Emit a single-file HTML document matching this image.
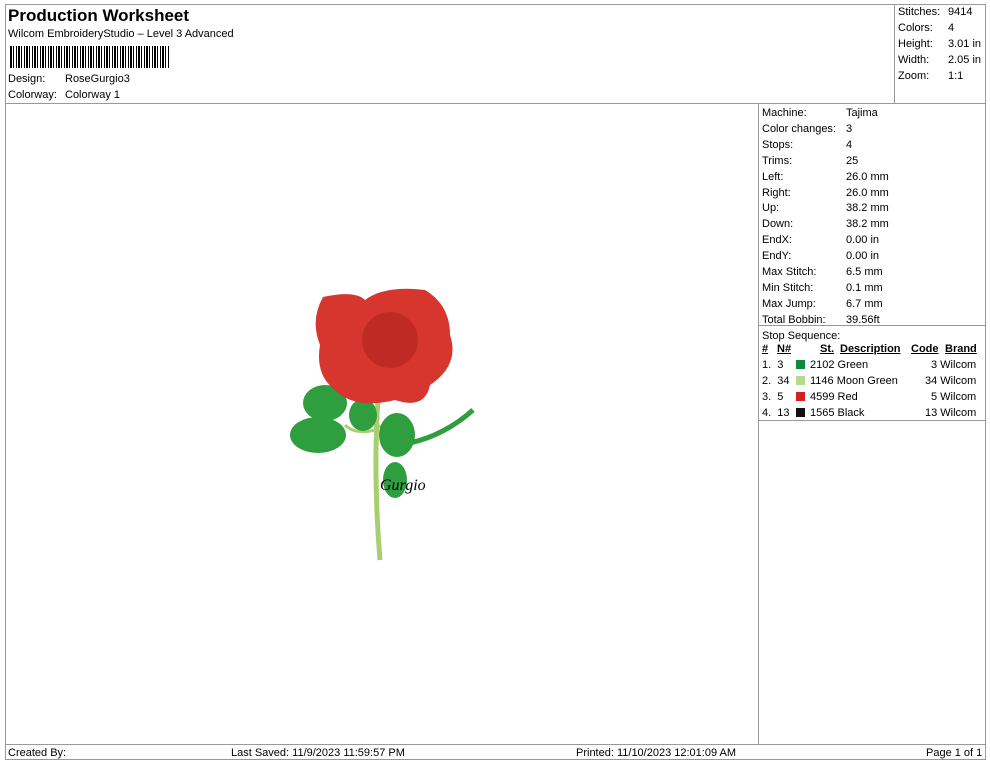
<!DOCTYPE html>
<html><head><style>
body{margin:0;width:990px;height:762px;background:#fff;font-family:"Liberation Sans",Arial,sans-serif;color:#000;position:relative;overflow:hidden}
.a{position:absolute;font-size:11px;white-space:nowrap}
.l{position:absolute;background:#999}
</style></head><body>
<div class="l" style="left:5px;top:4px;width:981px;height:1px"></div>
<div class="l" style="left:5px;top:4px;width:1px;height:756px"></div>
<div class="l" style="left:985px;top:4px;width:1px;height:756px"></div>
<div class="l" style="left:5px;top:759px;width:981px;height:1px"></div>
<div class="l" style="left:5px;top:103px;width:981px;height:1px"></div>
<div class="l" style="left:894px;top:4px;width:1px;height:100px"></div>
<div class="l" style="left:758px;top:103px;width:1px;height:641px"></div>
<div class="l" style="left:758px;top:325px;width:228px;height:1px"></div>
<div class="l" style="left:758px;top:420px;width:228px;height:1px"></div>
<div class="l" style="left:5px;top:744px;width:981px;height:1px"></div>
<div class="a" style="left:8px;top:6px;font-size:17px;font-weight:bold">Production Worksheet</div>
<div class="a" style="left:8px;top:28px">Wilcom EmbroideryStudio – Level 3 Advanced</div>
<div style="position:absolute;left:10px;top:46px;width:160px;height:22px;background:repeating-linear-gradient(90deg,#000 0 2px,#fff 2px 3px,#000 3px 4px,#fff 4px 6px,#000 6px 7px,#fff 7px 8px)"></div>
<div class="a" style="left:8px;top:73px">Design:</div><div class="a" style="left:65px;top:73px">RoseGurgio3</div>
<div class="a" style="left:8px;top:89px">Colorway:</div><div class="a" style="left:65px;top:89px">Colorway 1</div>
<div class="a" style="left:898px;top:6px">Stitches:</div><div class="a" style="left:948px;top:6px">9414</div>
<div class="a" style="left:898px;top:22px">Colors:</div><div class="a" style="left:948px;top:22px">4</div>
<div class="a" style="left:898px;top:38px">Height:</div><div class="a" style="left:948px;top:38px">3.01 in</div>
<div class="a" style="left:898px;top:54px">Width:</div><div class="a" style="left:948px;top:54px">2.05 in</div>
<div class="a" style="left:898px;top:70px">Zoom:</div><div class="a" style="left:948px;top:70px">1:1</div>
<div style="position:absolute;left:762px;top:106px;line-height:15.9px;font-size:11px">
Machine:<br>Color changes:<br>Stops:<br>Trims:<br>Left:<br>Right:<br>Up:<br>Down:<br>EndX:<br>EndY:<br>Max Stitch:<br>Min Stitch:<br>Max Jump:<br>Total Bobbin:<br>Stop Sequence:</div>
<div style="position:absolute;left:846px;top:106px;line-height:15.9px;font-size:11px">
Tajima<br>3<br>4<br>25<br>26.0 mm<br>26.0 mm<br>38.2 mm<br>38.2 mm<br>0.00 in<br>0.00 in<br>6.5 mm<br>0.1 mm<br>6.7 mm<br>39.56ft</div>
<div class="a" style="left:762px;top:343px;font-weight:bold;text-decoration:underline">#</div>
<div class="a" style="left:777px;top:343px;font-weight:bold;text-decoration:underline">N#</div>
<div class="a" style="left:820px;top:343px;font-weight:bold;text-decoration:underline">St.</div>
<div class="a" style="left:840px;top:343px;font-weight:bold;text-decoration:underline">Description</div>
<div class="a" style="left:911px;top:343px;font-weight:bold;text-decoration:underline">Code</div>
<div class="a" style="left:945px;top:343px;font-weight:bold;text-decoration:underline">Brand</div>
<div class="a" style="left:762px;top:359px">1.&nbsp; 3</div><div style="position:absolute;left:796px;top:360px;width:9px;height:9px;background:#0d8a3c"></div><div class="a" style="left:810px;top:359px">2102 Green</div><div class="a" style="left:931px;top:359px">3 Wilcom</div>
<div class="a" style="left:762px;top:375px">2.&nbsp; 34</div><div style="position:absolute;left:796px;top:376px;width:9px;height:9px;background:#b5dc8a"></div><div class="a" style="left:810px;top:375px">1146 Moon Green</div><div class="a" style="left:925px;top:375px">34 Wilcom</div>
<div class="a" style="left:762px;top:391px">3.&nbsp; 5</div><div style="position:absolute;left:796px;top:392px;width:9px;height:9px;background:#d42020"></div><div class="a" style="left:810px;top:391px">4599 Red</div><div class="a" style="left:931px;top:391px">5 Wilcom</div>
<div class="a" style="left:762px;top:407px">4.&nbsp; 13</div><div style="position:absolute;left:796px;top:408px;width:9px;height:9px;background:#111"></div><div class="a" style="left:810px;top:407px">1565 Black</div><div class="a" style="left:925px;top:407px">13 Wilcom</div>
<svg style="position:absolute;left:285px;top:285px" width="195" height="280">
<path d="M93 115 Q88 190 95 275" stroke="#a8cf6e" stroke-width="5" fill="none"/>
<path d="M92 140 Q110 150 125 140" stroke="#a8cf6e" stroke-width="3" fill="none"/>
<path d="M90 145 Q70 150 60 140" stroke="#a8cf6e" stroke-width="3" fill="none"/>
<ellipse cx="33" cy="150" rx="28" ry="18" fill="#2e9e3e"/>
<ellipse cx="40" cy="118" rx="22" ry="18" fill="#2e9e3e"/>
<ellipse cx="112" cy="150" rx="18" ry="22" fill="#2e9e3e"/>
<ellipse cx="78" cy="130" rx="14" ry="16" fill="#2e9e3e"/>
<ellipse cx="110" cy="195" rx="12" ry="18" fill="#2e9e3e"/>
<path d="M125 158 Q160 150 188 125" stroke="#2e9e3e" stroke-width="5" fill="none"/>
<path d="M38 12 Q70 5 80 15 Q100 0 140 5 Q165 20 165 50 Q175 80 145 100 Q140 125 110 115 Q70 125 50 105 Q30 90 35 60 Q25 35 38 12Z" fill="#d7362f"/>
<circle cx="105" cy="55" r="28" fill="#c02a25"/>
<text x="95" y="205" font-family="Liberation Serif,serif" font-style="italic" font-size="16">Gurgio</text>
</svg>
<div class="a" style="left:8px;top:747px">Created By:</div>
<div class="a" style="left:231px;top:747px">Last Saved: 11/9/2023 11:59:57 PM</div>
<div class="a" style="left:576px;top:747px">Printed: 11/10/2023 12:01:09 AM</div>
<div class="a" style="left:926px;top:747px">Page 1 of 1</div>
</body></html>
